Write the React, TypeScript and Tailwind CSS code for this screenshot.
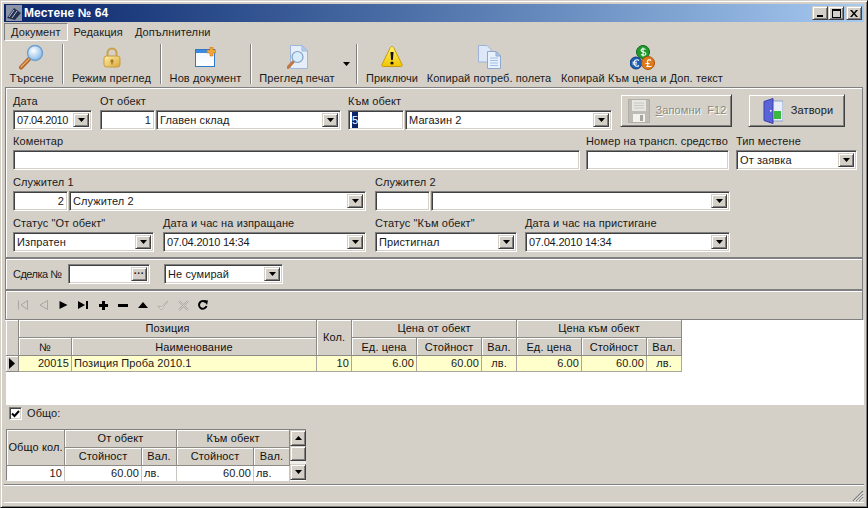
import type { ReactNode } from "react";

const sunken =
  "border border-t-[#808080] border-l-[#808080] border-b-white border-r-white shadow-[inset_1px_1px_0_#404040,inset_-1px_-1px_0_#d4d0c8]";
const raised =
  "bg-[#d4d0c8] border border-t-[#d4d0c8] border-l-[#d4d0c8] border-b-[#404040] border-r-[#404040] shadow-[inset_1px_1px_0_#ffffff,inset_-1px_-1px_0_#808080]";
const groove = "border border-[#808080] shadow-[inset_1px_1px_0_#ffffff,0_1px_0_#ffffff]";
const headCell =
  "flex items-center justify-center border-r border-b border-[#8c8a84] shadow-[inset_1px_1px_0_#ffffff] bg-[#d4d0c8] text-[#111] leading-none";
const subHead = `${headCell} pt-[2px]`;
const rowCell = "flex items-center border-r border-b border-[#a8a69f] bg-[#ffffcc] px-[2px] leading-none";
const totalCell = "flex items-center border-r border-[#c8c6c0] bg-white px-[2px] leading-none";

function Arrow() {
  return (
    <svg width="7" height="4" viewBox="0 0 7 4">
      <path d="M0 0h7L3.5 4z" fill="#000" />
    </svg>
  );
}

function DropBtn({ children }: { children?: ReactNode }) {
  return (
    <div className={`${raised} flex h-full w-[16px] shrink-0 items-center justify-center`}>
      {children ?? <Arrow />}
    </div>
  );
}

function Input({ value, right, className = "" }: { value?: ReactNode; right?: boolean; className?: string }) {
  return (
    <div
      className={`${sunken} flex h-[20px] items-center bg-white px-[3px] ${right ? "justify-end" : ""} ${className}`}
    >
      {value}
    </div>
  );
}

function Combo({ value, className = "" }: { value?: string; className?: string }) {
  return (
    <div className={`${sunken} flex h-[20px] items-center bg-white p-[2px] ${className}`}>
      <div className="min-w-0 flex-1 whitespace-nowrap pl-[1px]">{value}</div>
      <DropBtn />
    </div>
  );
}

function Field({ label, width, children }: { label: string; width: number; children: ReactNode }) {
  return (
    <div className="flex shrink-0 flex-col" style={{ width }}>
      <div className="h-[14px] whitespace-nowrap leading-[11px]">{label}</div>
      <div className="flex gap-[1px]">{children}</div>
    </div>
  );
}

function NumCombo({ num, value }: { num?: ReactNode; value?: string }) {
  return (
    <>
      <Input value={num} right className="w-[55px] shrink-0" />
      <Combo value={value} className="min-w-0 flex-1" />
    </>
  );
}

function ToolItem({ width, label, icon }: { width: number; label: string; icon: ReactNode }) {
  return (
    <div className="flex shrink-0 flex-col items-center" style={{ width }}>
      <div className="flex h-[26px] items-center justify-center">{icon}</div>
      <div className="mt-[2px] whitespace-nowrap leading-[13px]">{label}</div>
    </div>
  );
}

function Sep() {
  return <div className="mx-0 h-[40px] w-[2px] shrink-0 border-l border-[#808080] bg-white bg-clip-content" />;
}

function SearchIcon() {
  return (
    <svg width="26" height="26" viewBox="0 0 26 26">
      <defs>
        <radialGradient id="glass" cx="0.4" cy="0.35" r="0.7">
          <stop offset="0" stopColor="#ffffff" />
          <stop offset="1" stopColor="#7fb5e6" />
        </radialGradient>
      </defs>
      <path d="M2 23.5L11 14" stroke="#b3642a" strokeWidth="4" strokeLinecap="round" />
      <path d="M2 23L10 15" stroke="#eeb070" strokeWidth="1.3" strokeLinecap="round" />
      <circle cx="16" cy="9" r="7.5" fill="url(#glass)" stroke="#6f9fcb" strokeWidth="1.4" />
    </svg>
  );
}

function LockIcon() {
  return (
    <svg width="18" height="21" viewBox="0 0 18 21">
      <defs>
        <linearGradient id="lock" x1="0" x2="1" y1="0" y2="1">
          <stop offset="0" stopColor="#fff0a8" />
          <stop offset="1" stopColor="#d9a63a" />
        </linearGradient>
      </defs>
      <path d="M4.5 10V6a4.5 4.5 0 0 1 9 0v4" fill="none" stroke="#caa24a" strokeWidth="2" />
      <rect x="1" y="9" width="16" height="11" rx="2.5" fill="url(#lock)" stroke="#c79a3c" />
      <circle cx="9" cy="14" r="1.7" fill="#a67c26" />
      <rect x="8.3" y="14" width="1.4" height="3.5" fill="#a67c26" />
    </svg>
  );
}

function NewDocIcon() {
  return (
    <svg width="21" height="20" viewBox="0 0 21 20">
      <defs>
        <linearGradient id="win" x1="0" x2="0" y1="0" y2="1">
          <stop offset="0" stopColor="#eef6fd" />
          <stop offset="1" stopColor="#ffffff" />
        </linearGradient>
      </defs>
      <rect x="0.5" y="2.5" width="19" height="17" fill="url(#win)" stroke="#2f78c8" />
      <rect x="1" y="3" width="18" height="3" fill="#3a8ae0" />
      <path d="M12 3h3V0h3v3h3v3h-3v3h-3V6h-3z" fill="#f2a63a" stroke="#c77a1c" strokeWidth="0.6" />
    </svg>
  );
}

function PreviewIcon() {
  return (
    <svg width="21" height="24" viewBox="0 0 21 24">
      <path d="M3.5.5H15L20.5 6v17.5h-17z" fill="#e6eefa" stroke="#9db8dc" />
      <path d="M15 .5V6h5.5z" fill="#b9cdea" stroke="#9db8dc" />
      <path d="M1 22.5L6.5 16.5" stroke="#c2763c" strokeWidth="3" strokeLinecap="round" />
      <circle cx="10.5" cy="12" r="5.5" fill="#d8ecfb" stroke="#7c9fc4" strokeWidth="1.2" />
    </svg>
  );
}

function WarnIcon() {
  return (
    <svg width="22" height="24" viewBox="0 0 22 24">
      <defs>
        <linearGradient id="warn" x1="0" x2="0" y1="0" y2="1">
          <stop offset="0" stopColor="#fff46a" />
          <stop offset="1" stopColor="#f2c400" />
        </linearGradient>
      </defs>
      <path d="M11 1.5c1 0 1.4.6 2 1.8l8 16c.6 1.4 0 2.2-1.3 2.2H2.3C1 21.5.4 20.700 1 19.300l8-16C9.600 2.100 10 1.500 11 1.500z" fill="url(#warn)" stroke="#c89a10" />
      <path d="M9.500 7h3l-.6 8h-1.800z" fill="#111" />
      <circle cx="11" cy="18" r="1.600" fill="#111" />
    </svg>
  );
}

function CopyIcon() {
  return (
    <svg width="23" height="24" viewBox="0 0 23 24">
      <path d="M.5.500H9L13 4.500V17H.5z" fill="#dce8f8" stroke="#9db4d6" />
      <path d="M9.500 6.500H18L22.500 11v12.500h-13z" fill="#e8f0fb" stroke="#8ea8cf" />
      <path d="M18 6.500V11h4.500z" fill="#b8cbe6" stroke="#8ea8cf" />
      <path d="M12 13h8M12 15.500h8M12 18h8M12 20.500h8" stroke="#9fc0e8" />
    </svg>
  );
}

function CoinsIcon() {
  return (
    <svg width="25" height="25" viewBox="0 0 25 25">
      <circle cx="13" cy="7" r="6.500" fill="#1f9a2c" stroke="#0f6a1c" />
      <circle cx="6" cy="18" r="6" fill="#1c5fae" stroke="#123f7c" />
      <circle cx="18" cy="18" r="6.500" fill="#e07a1c" stroke="#a8540e" />
      <path d="M15.500 4.500c-1-1.200-4.500-1-4.500.8 0 2.400 5 1 5 3.500 0 1.800-3.800 1.900-5 .6M13 2.500v9" fill="none" stroke="#fff" strokeWidth="1.100" />
      <path d="M9 15.500c-2-1.500-5-.5-5 2.500s3 4 5 2.500M2.500 17.200h4.500M2.500 19h4.500" fill="none" stroke="#fff" strokeWidth="1.100" />
      <path d="M21 15.500c-1-1.200-4-.8-3.500 1.500l.3 3.200c0 .6-.5 1-1.300 1.300h5M15.500 18.500h4" fill="none" stroke="#fff" strokeWidth="1.200" />
    </svg>
  );
}

function FloppyIcon() {
  return (
    <svg width="22" height="24" viewBox="0 0 22 24">
      <path d="M.5.500h21v23H.5z" fill="#bdbbb4" stroke="#b0aea8" />
      <rect x="4" y="1" width="14" height="11" fill="#e8e6e0" />
      <path d="M6 4h10M6 6.500h10M6 9h10" stroke="#c8c6c0" />
      <rect x="5" y="15" width="12" height="8" fill="#f4f2ec" />
      <rect x="12" y="16" width="3" height="6" fill="#a8a6a0" />
    </svg>
  );
}

function DoorIcon() {
  return (
    <svg width="20" height="26" viewBox="0 0 20 26">
      <rect x="8" y="3" width="12" height="20" fill="#e8eef8" stroke="#8ea0c8" />
      <rect x="11" y="13" width="7" height="8" fill="#3cb83c" />
      <path d="M1 3.500L10 .5v25l-9-3z" fill="#5a64d8" stroke="#3a3fa8" />
      <rect x="7" y="12" width="1.500" height="1.500" fill="#fff" />
    </svg>
  );
}

function NavBtn({ children }: { children: ReactNode }) {
  return <div className="flex h-[12px] w-[20px] shrink-0 items-center justify-center">{children}</div>;
}

const dim = "#a8a6a0";

function NavBar() {
  return (
    <div className="flex items-center">
      <NavBtn>
        <svg width="12" height="10" viewBox="0 0 12 10">
          <path d="M1.500.5v9M10.500.5v9L4 5z" fill="none" stroke={dim} />
        </svg>
      </NavBtn>
      <NavBtn>
        <svg width="11" height="10" viewBox="0 0 11 10">
          <path d="M9.500.5v9L2 5z" fill="none" stroke={dim} />
        </svg>
      </NavBtn>
      <NavBtn>
        <svg width="9" height="8" viewBox="0 0 9 8">
          <path d="M.5 0v8L8.500 4z" fill="#000" />
        </svg>
      </NavBtn>
      <NavBtn>
        <svg width="10" height="8" viewBox="0 0 10 8">
          <path d="M0 0v8L7 4zM8 0h2v8H8z" fill="#000" />
        </svg>
      </NavBtn>
      <NavBtn>
        <svg width="9" height="9" viewBox="0 0 9 9">
          <path d="M3 0h3v3h3v3H6v3H3V6H0V3h3z" fill="#000" />
        </svg>
      </NavBtn>
      <NavBtn>
        <svg width="10" height="3" viewBox="0 0 10 3">
          <path d="M0 0h10v3H0z" fill="#000" />
        </svg>
      </NavBtn>
      <NavBtn>
        <svg width="10" height="6" viewBox="0 0 10 6">
          <path d="M5 0l5 6H0z" fill="#000" />
        </svg>
      </NavBtn>
      <NavBtn>
        <svg width="12" height="11" viewBox="0 0 12 11">
          <path d="M1 6l3 4 7-9-7 6z" fill="#e8e6e0" stroke={dim} strokeWidth="0.8" />
        </svg>
      </NavBtn>
      <NavBtn>
        <svg width="11" height="11" viewBox="0 0 11 11">
          <path d="M1 1l9 9M10 1l-9 9" stroke={dim} strokeWidth="2" />
          <path d="M1 1l9 9M10 1l-9 9" stroke="#e8e6e0" strokeWidth="0.7" />
        </svg>
      </NavBtn>
      <NavBtn>
        <svg width="10" height="10" viewBox="0 0 10 10">
          <path d="M7.800 2.500A3.800 3.800 0 1 0 8.500 6" fill="none" stroke="#000" strokeWidth="2" />
          <path d="M5.500 0l4.500.5L9 5z" fill="#000" />
        </svg>
      </NavBtn>
    </div>
  );
}

function ItemsGrid() {
  return (
    <div className="grid w-[676px] grid-cols-[13px_53px_245px_35px_65px_65px_35px_65px_65px_35px] grid-rows-[18px_18px_16px]">
      <div className={`${headCell} row-span-2`} />
      <div className={`${headCell} col-span-2`}>Позиция</div>
      <div className={`${headCell} row-span-2`}>Кол.</div>
      <div className={`${headCell} col-span-3`}>Цена от обект</div>
      <div className={`${headCell} col-span-3`}>Цена към обект</div>
      <div className={subHead}>№</div>
      <div className={subHead}>Наименование</div>
      <div className={subHead}>Ед. цена</div>
      <div className={subHead}>Стойност</div>
      <div className={subHead}>Вал.</div>
      <div className={subHead}>Ед. цена</div>
      <div className={subHead}>Стойност</div>
      <div className={subHead}>Вал.</div>
      <div className={`${headCell} justify-center`}>
        <svg width="6" height="11" viewBox="0 0 6 11">
          <path d="M0 0l6 5.500L0 11z" fill="#000" />
        </svg>
      </div>
      <div className={`${rowCell} justify-end`}>20015</div>
      <div className={rowCell}>Позиция Проба 2010.1</div>
      <div className={`${rowCell} justify-end`}>10</div>
      <div className={`${rowCell} justify-end`}>6.00</div>
      <div className={`${rowCell} justify-end`}>60.00</div>
      <div className={`${rowCell} justify-center`}>лв.</div>
      <div className={`${rowCell} justify-end`}>6.00</div>
      <div className={`${rowCell} justify-end`}>60.00</div>
      <div className={`${rowCell} justify-center`}>лв.</div>
    </div>
  );
}

function TotalsGrid() {
  return (
    <div className="flex h-[52px] w-[300px] border-l border-[#808080] border-t border-t-[#808080] border-b border-b-white">
      <div className="grid w-[283px] grid-cols-[58px_77px_35px_77px_36px] grid-rows-[18px_18px_15px]">
        <div className={`${headCell} row-span-2`}>Общо кол.</div>
        <div className={`${headCell} col-span-2`}>От обект</div>
        <div className={`${headCell} col-span-2`}>Към обект</div>
        <div className={headCell}>Стойност</div>
        <div className={headCell}>Вал.</div>
        <div className={headCell}>Стойност</div>
        <div className={headCell}>Вал.</div>
        <div className={`${totalCell} justify-end`}>10</div>
        <div className={`${totalCell} justify-end`}>60.00</div>
        <div className={totalCell}>лв.</div>
        <div className={`${totalCell} justify-end`}>60.00</div>
        <div className={totalCell}>лв.</div>
      </div>
      <div className="flex w-[17px] flex-col">
        <div className={`${raised} flex h-[16px] items-center justify-center`}>
          <svg width="7" height="4" viewBox="0 0 7 4">
            <path d="M3.500 0L7 4H0z" fill="#000" />
          </svg>
        </div>
        <div className={`${raised} h-[16px]`} />
        <div className="h-[3px] bg-[#eeeeea]" />
        <div className={`${raised} flex h-[16px] items-center justify-center`}>
          <Arrow />
        </div>
      </div>
    </div>
  );
}

export default function App() {
  return (
    <div
      className="flex h-[508px] w-[868px] flex-col overflow-hidden border border-t-[#d4d0c8] border-l-[#d4d0c8] border-r-black border-b-black bg-[#d4d0c8] p-[3px] text-[11px] tracking-[0.1px] text-[#1a1a1a] shadow-[inset_1px_1px_0_#ffffff,inset_-1px_-1px_0_#808080]"
      style={{ fontFamily: '"Liberation Sans", Arial, sans-serif' }}
    >
      {/* title bar */}
      <div className="flex h-[18px] shrink-0 items-center bg-gradient-to-r from-[#0a246a] to-[#a6caf0] pl-[2px] pr-[2px]">
        <svg width="16" height="16" viewBox="0 0 16 16">
          <rect width="16" height="16" fill="#8a93a8" />
          <path d="M1 13L8 3l7 5-6 7z" fill="#23304e" />
          <path d="M3 12l5-7M6 13l5-7" stroke="#b8c4dc" />
        </svg>
        <div className="ml-[2px] flex-1 text-[12px] font-bold text-white">Местене № 64</div>
        <div className={`${raised} flex h-[14px] w-[16px] items-end justify-center pb-[2px]`}>
          <div className="h-[2px] w-[6px] bg-black" />
        </div>
        <div className={`${raised} flex h-[14px] w-[16px] items-center justify-center`}>
          <div className="h-[9px] w-[9px] border border-t-2 border-black" />
        </div>
        <div className={`${raised} ml-[2px] flex h-[14px] w-[16px] items-center justify-center`}>
          <svg width="8" height="7" viewBox="0 0 8 7">
            <path d="M0 0h2l2 2.500L6 0h2L5 3.500 8 7H6L4 4.500 2 7H0l3-3.500z" fill="#000" />
          </svg>
        </div>
      </div>

      {/* menu */}
      <div className="flex h-[20px] shrink-0 items-center">
        <div className="flex h-[18px] items-center border border-t-[#808080] border-l-[#808080] border-r-white border-b-white px-[6px]">
          Документ
        </div>
        <div className="px-[6px]">Редакция</div>
        <div className="px-[6px]">Допълнителни</div>
      </div>

      {/* toolbar */}
      <div className="flex h-[45px] shrink-0 items-start pt-[2px]">
        <ToolItem width={55} label="Търсене" icon={<SearchIcon />} />
        <div className="w-[3px] shrink-0" />
        <Sep />
        <div className="w-[1px] shrink-0" />
        <ToolItem width={93} label="Режим преглед" icon={<LockIcon />} />
        <div className="w-[2px] shrink-0" />
        <Sep />
        <ToolItem width={87} label="Нов документ" icon={<NewDocIcon />} />
        <div className="w-[1px] shrink-0" />
        <Sep />
        <ToolItem width={90} label="Преглед печат" icon={<PreviewIcon />} />
        <div className="flex h-[40px] w-[8px] shrink-0 items-center justify-center">
          <Arrow />
        </div>
        <div className="w-[6px] shrink-0" />
        <Sep />
        <ToolItem width={68} label="Приключи" icon={<WarnIcon />} />
        <ToolItem width={126} label="Копирай потреб. полета" icon={<CopyIcon />} />
        <ToolItem width={180} label="Копирай Към цена и Доп. текст" icon={<CoinsIcon />} />
      </div>

      {/* document form */}
      <div className={`${groove} ml-[1px] mr-[1px] flex h-[171px] shrink-0 flex-col pl-[7px] pt-[6px]`}>
        <div className="flex h-[36px] items-start">
          <div className="mt-[2px] flex">
            <Field label="Дата" width={79}>
              <Combo value="07.04.2010" className="w-full tracking-[-0.4px]" />
            </Field>
            <div className="w-[8px]" />
            <Field label="От обект" width={241}>
              <NumCombo num="1" value="Главен склад" />
            </Field>
            <div className="w-[7px]" />
            <Field label="Към обект" width={264}>
              <Input
                value={<span className="bg-[#0a246a] px-0 text-white">5</span>}
                className="w-[56px] shrink-0"
              />
              <Combo value="Магазин 2" className="min-w-0 flex-1" />
            </Field>
          </div>
          <div className="w-[8px]" />
          <div className={`${raised} flex h-[33px] w-[112px] items-center justify-center gap-[6px] pl-[2px] text-[#8a8880] [text-shadow:1px_1px_0_#ffffff]`}>
            <FloppyIcon />
            <span>
              <span className="underline">З</span>апомни&nbsp; F12
            </span>
          </div>
          <div className="w-[16px]" />
          <div className={`${raised} flex h-[33px] w-[97px] items-center justify-center gap-[8px] pl-[3px]`}>
            <DoorIcon />
            <span>Затвори</span>
          </div>
        </div>

        <div className="mt-[6px] flex">
          <Field label="Коментар" width={567}>
            <Input className="w-full" />
          </Field>
          <div className="w-[6px]" />
          <Field label="Номер на трансп. средство" width={143}>
            <Input className="w-full" />
          </Field>
          <div className="w-[7px]" />
          <Field label="Тип местене" width={121}>
            <Combo value="От заявка" className="w-full" />
          </Field>
        </div>

        <div className="mt-[7px] flex">
          <Field label="Служител 1" width={353}>
            <NumCombo num="2" value="Служител 2" />
          </Field>
          <div className="w-[9px]" />
          <Field label="Служител 2" width={355}>
            <NumCombo />
          </Field>
        </div>

        <div className="mt-[7px] flex">
          <Field label={'Статус "От обект"'} width={141}>
            <Combo value="Изпратен" className="w-full" />
          </Field>
          <div className="w-[9px]" />
          <Field label="Дата и час на изпращане" width={203}>
            <Combo value="07.04.2010 14:34" className="w-full tracking-[-0.2px]" />
          </Field>
          <div className="w-[9px]" />
          <Field label={'Статус "Към обект"'} width={142}>
            <Combo value="Пристигнал" className="w-full" />
          </Field>
          <div className="w-[8px]" />
          <Field label="Дата и час на пристигане" width={205}>
            <Combo value="07.04.2010 14:34" className="w-full tracking-[-0.2px]" />
          </Field>
        </div>
      </div>

      {/* deal row */}
      <div className={`${groove} mx-[1px] flex h-[32px] shrink-0 items-center pl-[7px]`}>
        <div className="w-[55px] whitespace-nowrap tracking-[-0.5px]">Сделка №</div>
        <div className={`${sunken} flex h-[20px] w-[82px] items-center bg-white p-[2px]`}>
          <div className="flex-1" />
          <DropBtn>
            <span className="text-[10px] font-bold leading-none">···</span>
          </DropBtn>
        </div>
        <div className="w-[14px]" />
        <Combo value="Не сумирай" className="w-[119px]" />
      </div>

      {/* nav bar */}
      <div className={`${groove} mx-[1px] flex h-[30px] shrink-0 items-center pl-[7px]`}>
        <NavBar />
      </div>

      {/* items */}
      <div className="ml-[2px] flex h-[85px] shrink-0 flex-col bg-white">
        <ItemsGrid />
      </div>

      {/* totals */}
      <div className="flex h-[24px] shrink-0 items-start gap-[5px] pl-[5px] pt-[2px]">
        <div className={`${sunken} flex h-[13px] w-[13px] items-center justify-center bg-white`}>
          <svg width="9" height="8" viewBox="0 0 9 8">
            <path d="M1 3.500l2.500 2.500L8 1" fill="none" stroke="#000" strokeWidth="2" />
          </svg>
        </div>
        <span className="leading-[13px]">Общо:</span>
      </div>
      <div className="ml-[2px] shrink-0">
        <TotalsGrid />
      </div>

      {/* status bar */}
      <div className="mt-[3px] flex h-[19px] shrink-0 items-end justify-end border-t border-t-[#808080] border-b border-b-white shadow-[inset_0_1px_0_#ffffff]">
        <svg width="12" height="12" viewBox="0 0 12 12">
          <path d="M11 1L1 11M11 4L4 11M11 7L7 11" stroke="#808080" strokeWidth="1.300" />
          <path d="M11 2.500L2.500 11M11 5.500L5.500 11M11 8.500L8.500 11" stroke="#ffffff" />
        </svg>
      </div>
    </div>
  );
}
